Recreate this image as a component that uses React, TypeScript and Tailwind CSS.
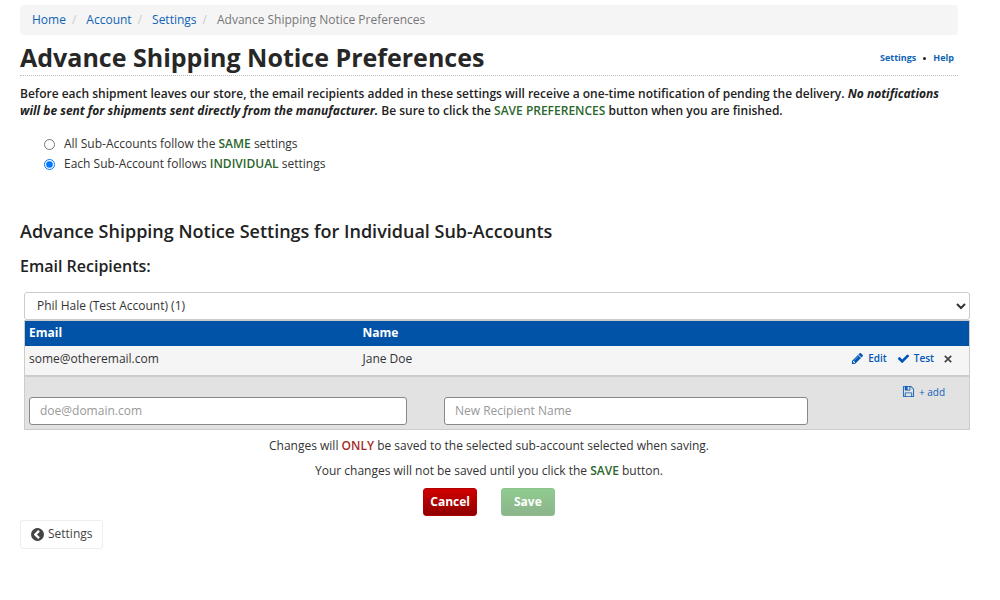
import { useState } from 'react';
import type { FormEvent, ReactNode } from 'react';

interface Recipient {
  email: string;
  name: string;
}

const crumbs = ['Home', 'Account', 'Settings'];

const icons = {
  pencil:
    'M491 1536l91-91-235-235-91 91v107h128v128h107zm523-928q0-22-22-22-10 0-17 7l-542 542q-7 7-7 17 0 22 22 22 10 0 17-7l542-542q7-7 7-17zm-54-192l416 416-832 832h-416v-416zm683 96q0 53-37 90l-166 166-416-416 166-165q36-38 90-38 53 0 91 38l235 234q37 39 37 91z',
  check:
    'M1671 566q0 40-28 68l-724 724-136 136q-28 28-68 28t-68-28l-136-136-362-362q-28-28-28-68t28-68l136-136q28-28 68-28t68 28l294 295 656-657q28-28 68-28t68 28l136 136q28 28 28 68z',
  save:
    'M512 1536h768v-384h-768v384zm896 0h128v-896q0-14-10-38.5t-20-34.5l-281-281q-10-10-34-20t-39-10v416q0 40-28 68t-68 28h-576q-40 0-68-28t-28-68v-416h-128v1280h128v-416q0-40 28-68t68-28h832q40 0 68 28t28 68v416zm-384-928v-320q0-13-9.5-22.5t-22.5-9.5h-192q-13 0-22.5 9.5t-9.5 22.5v320q0 13 9.5 22.5t22.5 9.5h192q13 0 22.5-9.5t9.5-22.5zm640 32v928q0 40-28 68t-68 28h-1344q-40 0-68-28t-28-68v-1344q0-40 28-68t68-28h928q40 0 88 20t76 48l280 280q28 28 48 76t20 88z',
  circleLeft:
    'M1037 1395l102-102q19-19 19-45t-19-45l-307-307 307-307q19-19 19-45t-19-45l-102-102q-19-19-45-19t-45 19l-454 454q-19 19-19 45t19 45l454 454q19 19 45 19t45-19zm627-499q0 209-103 385.5t-279.5 279.5-385.5 103-385.5-103-279.5-279.5-103-385.5 103-385.5 279.5-279.5 385.5-103 385.5 103 279.5 279.5 103 385.5z',
};

export default function App() {
  const [mode, setMode] = useState<'same' | 'individual'>('individual');
  const [recipients, setRecipients] = useState<Recipient[]>([
    { email: 'some@otheremail.com', name: 'Jane Doe' },
  ]);
  const [email, setEmail] = useState('');
  const [name, setName] = useState('');

  const handleAdd = () => {
    if (!email) return;
    setRecipients(prev => [...prev, { email, name }]);
    setEmail('');
    setName('');
  };

  const handleRemove = (target: string) => {
    setRecipients(prev => prev.filter(r => r.email !== target));
  };

  const handleSubmit = (e: FormEvent) => e.preventDefault();

  return (
    <div className="pt-[5px] pl-5 pr-[30px] pb-10 font-['Open_Sans','Noto_Sans',sans-serif] text-xs text-[#333]">
      <div className="mr-3">
        {/* Breadcrumb */}
        <nav aria-label="Breadcrumb" className="rounded bg-[#f5f5f5] px-3 py-[6px]">
          <ol className="flex leading-[18px]">
            {crumbs.map(c => (
              <li key={c} className="flex">
                <a href="#" className="text-[#0f63b5]">{c}</a>
                <span className="pl-[6px] pr-[10px] text-[#ccc]">/</span>
              </li>
            ))}
            <li className="text-[#777]">Advance Shipping Notice Preferences</li>
          </ol>
        </nav>

        {/* Title */}
        <header className="flex items-center justify-between border-b border-dotted border-[#bbb] pt-[6px] pb-[2px]">
          <h1 className="text-[25px] leading-8 font-bold text-[#272727]">
            Advance Shipping Notice Preferences
          </h1>
          <div className="flex items-center gap-[7px] pt-[2px] pr-1 text-[9px] font-bold text-[#0f63b5]">
            <a href="#">Settings</a>
            <span className="size-[3px] rounded-full bg-[#222]" />
            <a href="#">Help</a>
          </div>
        </header>

        <p className="mt-[9px] leading-[17px] font-semibold text-[#222]">
          Before each shipment leaves our store, the email recipients added in these settings will
          receive a one-time notification of pending the delivery.{' '}
          <em className="font-bold">
            No notifications will be sent for shipments sent directly from the manufacturer.
          </em>{' '}
          Be sure to click the <Green>SAVE PREFERENCES</Green> button when you are finished.
        </p>
      </div>

      <form onSubmit={handleSubmit}>
        {/* Sub-account mode */}
        <div className="mt-[15px] ml-6 flex flex-col">
          <label className="flex items-center gap-[9px] leading-5">
            <input
              type="radio"
              name="mode"
              className="size-[11px]"
              checked={mode === 'same'}
              onChange={() => setMode('same')}
            />
            <span>All Sub-Accounts follow the <Green>SAME</Green> settings</span>
          </label>
          <label className="flex items-center gap-[9px] leading-5">
            <input
              type="radio"
              name="mode"
              className="size-[11px]"
              checked={mode === 'individual'}
              onChange={() => setMode('individual')}
            />
            <span>Each Sub-Account follows <Green>INDIVIDUAL</Green> settings</span>
          </label>
        </div>

        <h2 className="mt-[45px] text-lg leading-6 font-semibold text-[#222]">
          Advance Shipping Notice Settings for Individual Sub-Accounts
        </h2>
        <h3 className="mt-[13px] text-base leading-5 font-semibold text-[#222]">
          Email Recipients:
        </h3>

        {/* Recipients */}
        <div className="mt-4 ml-1">
          <select
            aria-label="Sub-account"
            className="block h-7 w-full rounded-[3px] border border-[#ccc] bg-white pb-[2px] pl-2 text-xs text-[#333]"
          >
            <option>Phil Hale (Test Account) (1)</option>
          </select>
          <table className="w-full table-fixed border-collapse border border-[#ccc]">
            <thead>
              <tr className="h-[25px] bg-[#0053a6] text-left text-white">
                <th className="w-[334px] px-1 font-bold">Email</th>
                <th className="px-1 font-bold">Name</th>
                <th className="w-[140px]" aria-label="Actions" />
              </tr>
            </thead>
            <tbody>
              {recipients.map(r => (
                <tr key={r.email} className="h-[30px] bg-[#f5f5f5]">
                  <td className="px-1 pb-[3px]">{r.email}</td>
                  <td className="px-1 pb-[3px]">{r.name}</td>
                  <td className="pr-[17px] pb-[2px]">
                    <div className="flex items-center justify-end gap-[10px] text-[10px] font-semibold text-[#0055b8]">
                      <button type="button" className="flex items-center gap-1">
                        <Icon path={icons.pencil} className="size-[13px]" />
                        Edit
                      </button>
                      <button type="button" className="flex items-center gap-1">
                        <Icon path={icons.check} className="size-[13px]" />
                        Test
                      </button>
                      <button
                        type="button"
                        aria-label="Remove"
                        className="text-[#444]"
                        onClick={() => handleRemove(r.email)}
                      >
                        <svg viewBox="0 0 8 8" className="size-2" stroke="currentColor" strokeWidth="1.7">
                          <path d="M.8.8l6.4 6.4M7.2.8L.8 7.2" />
                        </svg>
                      </button>
                    </div>
                  </td>
                </tr>
              ))}
              <tr className="border-t-2 border-[#ccc] bg-[#e2e2e2]">
                <td colSpan={3} className="pt-[7px] pr-6 pb-1 pl-1">
                  <div className="grid grid-cols-[378fr_364fr_100fr] items-start gap-[37px]">
                    <input
                      aria-label="Recipient email"
                      type="email"
                      placeholder="doe@domain.com"
                      className="mt-[13px] h-7 w-full rounded-[3px] border border-[#888] bg-white px-[10px] placeholder:text-[#999]"
                      value={email}
                      onChange={e => setEmail(e.target.value)}
                    />
                    <input
                      aria-label="Recipient name"
                      placeholder="New Recipient Name"
                      className="mt-[13px] h-7 w-full rounded-[3px] border border-[#888] bg-white px-[10px] placeholder:text-[#999]"
                      value={name}
                      onChange={e => setName(e.target.value)}
                    />
                    <button
                      type="button"
                      className="flex items-center gap-1 justify-self-end text-[10px] leading-4 text-[#0f5fb8]"
                      onClick={handleAdd}
                    >
                      <Icon path={icons.save} className="size-[13px]" />
                      + add
                    </button>
                  </div>
                </td>
              </tr>
            </tbody>
          </table>
        </div>

        {/* Save */}
        <div className="mr-3 text-center leading-[18px]">
          <p className="mt-[7px]">
            Changes will <strong className="font-semibold text-[#a52a2a]">ONLY</strong> be saved to
            the selected sub-account selected when saving.
          </p>
          <p className="mt-[7px]">
            Your changes will not be saved until you click the <Green>SAVE</Green> button.
          </p>
          <div className="mt-2 flex justify-center gap-6 font-bold text-white">
            <button
              type="button"
              className="h-7 rounded-[3px] border border-[#b00000] bg-linear-to-b from-[#d00000] to-[#900000] px-[6px]"
            >
              Cancel
            </button>
            <button
              type="submit"
              className="h-7 rounded-[3px] border border-[#8cc08c] bg-linear-to-b from-[#8fcb8f] to-[#8cb48c] px-3"
            >
              Save
            </button>
          </div>
        </div>
      </form>

      <a
        href="#"
        className="mt-1 inline-flex h-[29px] items-center gap-[3px] rounded-[3px] border border-[#eee] px-[9px] text-[#444]"
      >
        <Icon path={icons.circleLeft} className="size-[15px]" />
        Settings
      </a>
    </div>
  );
}

function Green({ children }: { children: ReactNode }) {
  return <strong className="font-semibold text-[#2b662b]">{children}</strong>;
}

function Icon({ path, className }: { path: string; className: string }) {
  return (
    <svg viewBox="0 0 1792 1792" fill="currentColor" aria-hidden="true" className={className}>
      <path d={path} />
    </svg>
  );
}
